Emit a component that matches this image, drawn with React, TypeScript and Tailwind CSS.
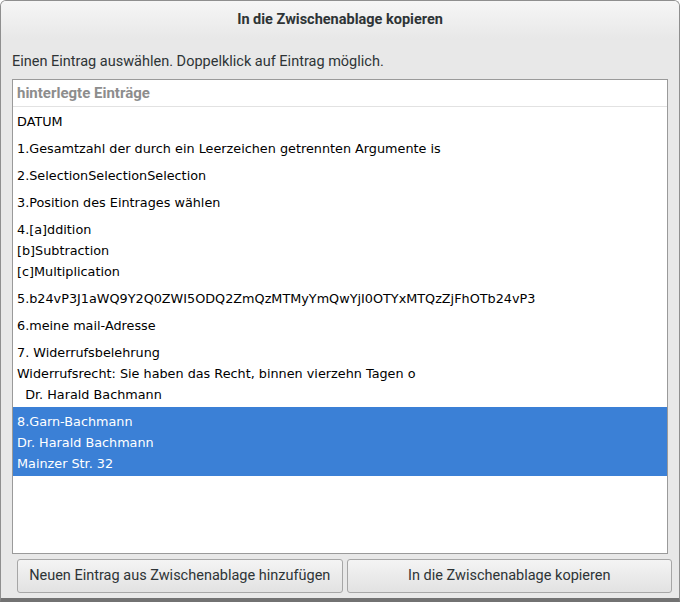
const entries: string[][] = [
  ["DATUM"],
  ["1.Gesamtzahl der durch ein Leerzeichen getrennten Argumente is"],
  ["2.SelectionSelectionSelection"],
  ["3.Position des Eintrages wählen"],
  ["4.[a]ddition", "[b]Subtraction", "[c]Multiplication"],
  ["5.b24vP3J1aWQ9Y2Q0ZWI5ODQ2ZmQzMTMyYmQwYjI0OTYxMTQzZjFhOTb24vP3"],
  ["6.meine mail-Adresse"],
  ["7. Widerrufsbelehrung", "Widerrufsrecht: Sie haben das Recht, binnen vierzehn Tagen o", "  Dr. Harald Bachmann"],
  ["8.Garn-Bachmann", "Dr. Harald Bachmann", "Mainzer Str. 32"],
]

const selected = 8

export default function App() {
  return (
    <div className="flex h-[602px] w-[680px] flex-col overflow-hidden rounded-t-[6px] border border-b-[4px] border-[#8f8f8f] border-b-[#727272] bg-[#e8e8e8] font-['Roboto',sans-serif] text-[#2e3436]">
      <header className="flex h-[38px] shrink-0 items-center justify-center bg-gradient-to-b from-[#f6f6f6] to-[#e8e8e8] text-[14.5px] font-bold">
        In die Zwischenablage kopieren
      </header>
      <p className="mx-[11px] mt-[14px] mb-[8px] text-[14.5px] leading-[18px]">
        Einen Eintrag auswählen. Doppelklick auf Eintrag möglich.
      </p>
      <div className="mx-[11px] flex flex-1 flex-col border border-[#9a9a9a] bg-white">
        <div className="h-[27px] border-b border-[#e2e2e2] px-[4px] pt-[4px] text-[15px] leading-[18px] font-bold text-[#8d8d8d]">
          hinterlegte Einträge
        </div>
        <ul className="font-['DejaVu_Sans',sans-serif] text-[12.8px]">
          {entries.map((lines, i) => (
            <li
              key={i}
              className={`whitespace-pre px-[4px] pt-[4px] pb-[2px] leading-[21px] ${i === selected ? "bg-[#3b80d6] text-white" : "text-black"}`}
            >
              {lines.map((l, j) => (
                <div key={j}>{l}</div>
              ))}
            </li>
          ))}
        </ul>
      </div>
      <div className="mt-[5px] mb-[5px] ml-[16px] mr-[7px] flex gap-[4px]">
        <button className="h-[34px] flex-1 rounded-[3px] border border-[#a6a6a6] bg-gradient-to-b from-[#f4f4f4] to-[#e2e2e2] text-[14.5px]">
          Neuen Eintrag aus Zwischenablage hinzufügen
        </button>
        <button className="h-[34px] flex-1 rounded-[3px] border border-[#a6a6a6] bg-gradient-to-b from-[#f4f4f4] to-[#e2e2e2] text-[14.5px]">
          In die Zwischenablage kopieren
        </button>
      </div>
    </div>
  )
}
